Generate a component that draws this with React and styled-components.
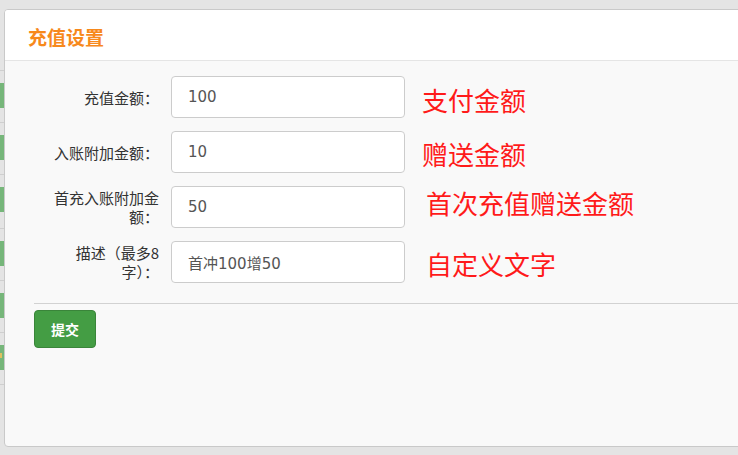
import React from 'react'
import styled, { createGlobalStyle } from 'styled-components'

const GlobalStyle = createGlobalStyle`
    html, body {
        margin: 0;
        padding: 0;
        background: #e4e4e4;
        overflow: hidden;
    }
    body {
        font-family: "Liberation Sans", "Noto Sans CJK SC", sans-serif;
    }
`

const Page = styled.div`
    display: flex;
    width: 738px;
    height: 455px;
    overflow: hidden;
`

// the table behind the dialog, only its first few pixels show
const BackTable = styled.div`
    width: 4px;
    flex-shrink: 0;
    padding-top: 70px;
`
const BackRow = styled.div`
    height: ${props => props.h}px;
    border-top: 1px solid #cfcfcf;
    padding-top: 12px;
    box-sizing: border-box;
`
const BackBtn = styled.div`
    height: 25px;
    background: #76b67a;
    position: relative;
`
const Dot = styled.span`
    position: absolute;
    left: 0;
    top: 8px;
    width: 2px;
    height: 5px;
    background: #e0c060;
`

const Modal = styled.div`
    flex-shrink: 0;
    width: 760px;
    height: 436px;
    margin-top: 9px;
    border: 1px solid #c9c9c9;
    border-radius: 4px;
    background: #f9f9f9;
    display: flex;
    flex-direction: column;
    overflow: hidden;
`
const Header = styled.div`
    height: 50px;
    background: #fff;
    border-bottom: 1px solid #e5e5e5;
    display: flex;
    align-items: center;
    padding-left: 23px;
`
const Title = styled.h3`
    margin: 0;
    padding-top: 2px;
    font-family: "Noto Sans CJK SC", sans-serif;
    font-size: 19px;
    font-weight: 700;
    color: #f7891c;
`
const Body = styled.div`
    flex: 1;
    padding: 15px 0 0 29px;
    display: flex;
    flex-direction: column;
`
const Row = styled.div`
    display: flex;
    align-items: center;
    margin-bottom: 13px;
    padding-left: 19px;
`
const Label = styled.label`
    width: 106px;
    text-align: right;
    font-family: "Noto Sans CJK SC", sans-serif;
    font-size: 15px;
    line-height: 19px;
    color: #333;
    margin-right: 12px;
    flex-shrink: 0;
`
const Input = styled.input`
    width: 234px;
    height: 42px;
    box-sizing: border-box;
    border: 1px solid #ccc;
    border-radius: 4px;
    background: #fff;
    padding: 0 16px;
    font-family: "DejaVu Sans", "Noto Sans CJK SC", sans-serif;
    font-size: 15px;
    color: #555;
    outline: none;
    flex-shrink: 0;
`
const Note = styled.span`
    margin-left: ${props => props.dx}px;
    margin-top: ${props => props.dy * 2}px;
    font-family: "Noto Sans CJK SC", sans-serif;
    font-size: 26px;
    color: #ff1a1a;
    white-space: nowrap;
`
const Divider = styled.hr`
    margin: 7px 0 0 0;
    border: 0;
    border-top: 1px solid #d2d2d2;
`
const SubmitBtn = styled.button`
    align-self: flex-start;
    margin-top: 6px;
    width: 62px;
    height: 38px;
    background: #449d44;
    border: 1px solid #3a853a;
    border-radius: 4px;
    color: #fff;
    font-family: "Noto Sans CJK SC", sans-serif;
    font-size: 14px;
    font-weight: 700;
    padding: 0;
`

const fields = [
    { label: '充值金额：', value: '100', note: '支付金额', dx: 17, dy: 2 },
    { label: '入账附加金额：', value: '10', note: '赠送金额', dx: 17, dy: 1 },
    { label: '首充入账附加金额：', value: '50', note: '首次充值赠送金额', dx: 21, dy: -5 },
    { label: '描述（最多8字）：', value: '首冲100增50', note: '自定义文字', dx: 21, dy: 1 },
]

const backRows = [52, 52, 54, 52, 52, 52]

export default function App() {
    return (
        <>
            <GlobalStyle />
            <Page>
                <BackTable>
                    {backRows.map((h, i) => (
                        <BackRow key={i} h={h}>
                            <BackBtn>{i === 5 && <Dot />}</BackBtn>
                        </BackRow>
                    ))}
                    <BackRow h={1} />
                </BackTable>
                <Modal>
                    <Header>
                        <Title>充值设置</Title>
                    </Header>
                    <Body>
                        {fields.map(f => (
                            <Row key={f.label}>
                                <Label>{f.label}</Label>
                                <Input defaultValue={f.value} />
                                <Note dx={f.dx} dy={f.dy}>{f.note}</Note>
                            </Row>
                        ))}
                        <Divider />
                        <SubmitBtn>提交</SubmitBtn>
                    </Body>
                </Modal>
            </Page>
        </>
    )
}
